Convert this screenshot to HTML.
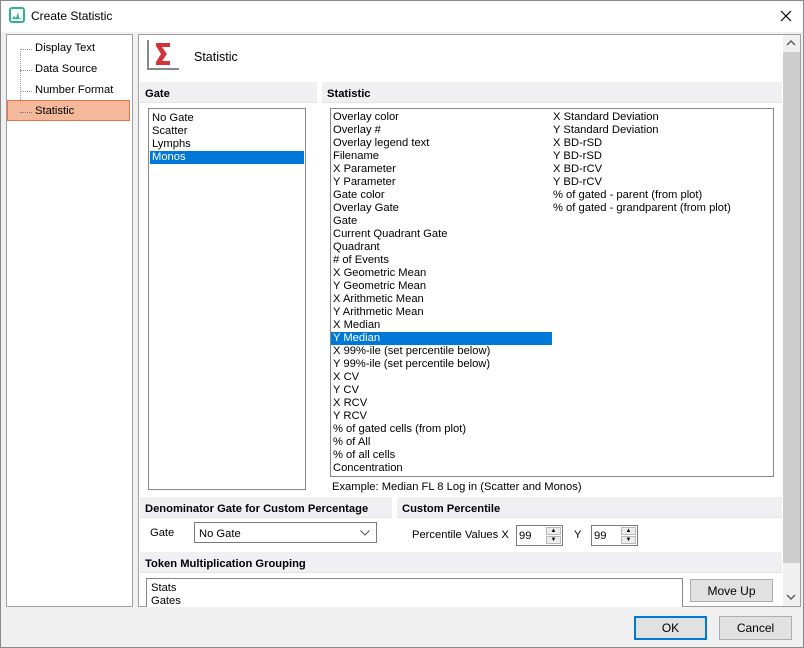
<!DOCTYPE html><html><head><style>
*{margin:0;padding:0;box-sizing:border-box}
body{width:804px;height:648px;position:relative;background:#f0f0f0;font-family:"Liberation Sans",sans-serif;font-size:11.2px;color:#000;overflow:hidden}
.a{position:absolute}
.hd{position:absolute;background:#f0f0f3;font-weight:bold;padding-left:5px;padding-top:2px;height:21px;line-height:21px;border-bottom:1px solid #e3e3e8}
.box{position:absolute;background:#fff;border:1px solid #828790}
.li{height:13px;line-height:13px;padding-left:2px;white-space:nowrap}
.sel{background:#0078d7;color:#fff}
.btn{position:absolute;background:#e1e1e1;border:1px solid #adadad;text-align:center;font-size:12px}
.spin{position:absolute;background:#fff;border:1px solid #7a7a7a;height:21px;width:47px}
.spin span{position:absolute;left:2px;top:4px}
.sb{position:absolute;right:1px;width:15px;height:8px;background:#ececec;border:1px solid #bbb;font-size:6px;line-height:7px;text-align:center}
</style></head><body>
<div class="a" style="left:0;top:0;width:804px;height:32px;background:#fff;border:1px solid #999;border-bottom:none"></div>
<div class="a" style="left:0;top:0;width:804px;height:648px;border:1px solid #888;pointer-events:none"></div>
<svg class="a" style="left:9px;top:7px" width="16" height="16"><rect x="1" y="1" width="14" height="14" rx="2" fill="none" stroke="#2fb48a" stroke-width="2"/><path d="M3 12 L5 9 L7 11 L9 5 L10 11 L13 12Z" fill="#2fb48a"/></svg>
<div class="a" style="left:31px;top:9px;font-size:12px">Create Statistic</div>
<svg class="a" style="left:780px;top:10px" width="12" height="12"><path d="M1 1 L11 11 M11 1 L1 11" stroke="#000" stroke-width="1.2"/></svg>

<div class="box" style="left:6px;top:34px;width:127px;height:573px;border-color:#a0a0a0"></div>
<div class="a" style="left:20px;top:49px;width:1px;height:63px;border-left:1px dotted #999"></div>
<div class="a" style="left:20px;top:49px;width:12px;border-top:1px dotted #999"></div>
<div class="a" style="left:20px;top:70px;width:12px;border-top:1px dotted #999"></div>
<div class="a" style="left:20px;top:91px;width:12px;border-top:1px dotted #999"></div>
<div class="a" style="left:35px;top:42px">Display Text</div>
<div class="a" style="left:35px;top:63px">Data Source</div>
<div class="a" style="left:35px;top:84px">Number Format</div>
<div class="a" style="left:7px;top:100px;width:123px;height:21px;background:#f4b89b;border:1px solid #e8704a"></div>
<div class="a" style="left:20px;top:112px;width:12px;border-top:1px dotted #777"></div>
<div class="a" style="left:35px;top:105px">Statistic</div>

<div class="box" style="left:138px;top:34px;width:663px;height:573px;border-color:#a0a0a0"></div>
<svg class="a" style="left:147px;top:40px" width="34" height="32"><path d="M1 0 V29 H32" fill="none" stroke="#888" stroke-width="2"/><path d="M9 3 H23 V7 H15 L20 14 L15 21 H23 V25 H9 V22 L14 14 L9 6Z" fill="#d3343a"/></svg>
<div class="a" style="left:194px;top:50px;font-size:12.5px">Statistic</div>

<div class="hd" style="left:140px;top:82px;width:177px">Gate</div>
<div class="hd" style="left:322px;top:82px;width:460px">Statistic</div>
<div class="box" style="left:148px;top:108px;width:158px;height:382px;padding:3px 1px">
<div class="li">No Gate</div><div class="li">Scatter</div><div class="li">Lymphs</div><div class="li sel">Monos</div></div>
<div class="box" style="left:330px;top:108px;width:444px;height:369px">
<div style="position:absolute;left:0px;top:2px;width:221px">
<div class="li">Overlay color</div><div class="li">Overlay #</div><div class="li">Overlay legend text</div><div class="li">Filename</div><div class="li">X Parameter</div><div class="li">Y Parameter</div><div class="li">Gate color</div><div class="li">Overlay Gate</div><div class="li">Gate</div><div class="li">Current Quadrant Gate</div><div class="li">Quadrant</div><div class="li"># of Events</div><div class="li">X Geometric Mean</div><div class="li">Y Geometric Mean</div><div class="li">X Arithmetic Mean</div><div class="li">Y Arithmetic Mean</div><div class="li">X Median</div><div class="li sel">Y Median</div><div class="li">X 99%-ile (set percentile below)</div><div class="li">Y 99%-ile (set percentile below)</div><div class="li">X CV</div><div class="li">Y CV</div><div class="li">X RCV</div><div class="li">Y RCV</div><div class="li">% of gated cells (from plot)</div><div class="li">% of All</div><div class="li">% of all cells</div><div class="li">Concentration</div></div>
<div style="position:absolute;left:220px;top:2px">
<div class="li">X Standard Deviation</div><div class="li">Y Standard Deviation</div><div class="li">X BD-rSD</div><div class="li">Y BD-rSD</div><div class="li">X BD-rCV</div><div class="li">Y BD-rCV</div><div class="li">% of gated - parent (from plot)</div><div class="li">% of gated - grandparent (from plot)</div></div>
</div>
<div class="a" style="left:332px;top:481px">Example: Median FL 8 Log in (Scatter and Monos)</div>

<div class="hd" style="left:140px;top:497px;width:252px">Denominator Gate for Custom Percentage</div>
<div class="hd" style="left:397px;top:497px;width:385px">Custom Percentile</div>
<div class="a" style="left:150px;top:527px">Gate</div>
<div class="a" style="left:194px;top:522px;width:183px;height:21px;background:#fff;border:1px solid #7a7a7a"><span style="position:absolute;left:4px;top:5px">No Gate</span><svg style="position:absolute;right:6px;top:7px" width="10" height="6"><path d="M0.5 0.5 L5 5 L9.5 0.5" fill="none" stroke="#555"/></svg></div>
<div class="a" style="left:412px;top:529px">Percentile Values X</div>
<div class="spin" style="left:516px;top:525px"><span>99</span><div class="sb" style="top:1px">▲</div><div class="sb" style="top:10px">▼</div></div>
<div class="a" style="left:574px;top:529px">Y</div>
<div class="spin" style="left:591px;top:525px"><span>99</span><div class="sb" style="top:1px">▲</div><div class="sb" style="top:10px">▼</div></div>

<div class="hd" style="left:140px;top:552px;width:642px">Token Multiplication Grouping</div>
<div class="a" style="left:146px;top:578px;width:537px;height:29px;background:#fff;border:1px solid #828790;border-bottom:none;padding:3px 4px;line-height:13px">Stats<br>Gates</div>
<div class="btn" style="left:690px;top:579px;width:83px;height:23px;line-height:22px">Move Up</div>

<div class="a" style="left:783px;top:35px;width:17px;height:571px;background:#f0f0f0"></div>
<div class="a" style="left:783px;top:52px;width:17px;height:511px;background:#cdcdcd"></div>
<svg class="a" style="left:786px;top:40px" width="10" height="6"><path d="M1 5 L5 1 L9 5" fill="none" stroke="#606060" stroke-width="1.5"/></svg>
<svg class="a" style="left:786px;top:594px" width="10" height="6"><path d="M1 1 L5 5 L9 1" fill="none" stroke="#606060" stroke-width="1.5"/></svg>

<div class="btn" style="left:634px;top:616px;width:73px;height:24px;line-height:21px;border:2px solid #0078d7">OK</div>
<div class="btn" style="left:719px;top:616px;width:73px;height:24px;line-height:22px">Cancel</div>
</body></html>
